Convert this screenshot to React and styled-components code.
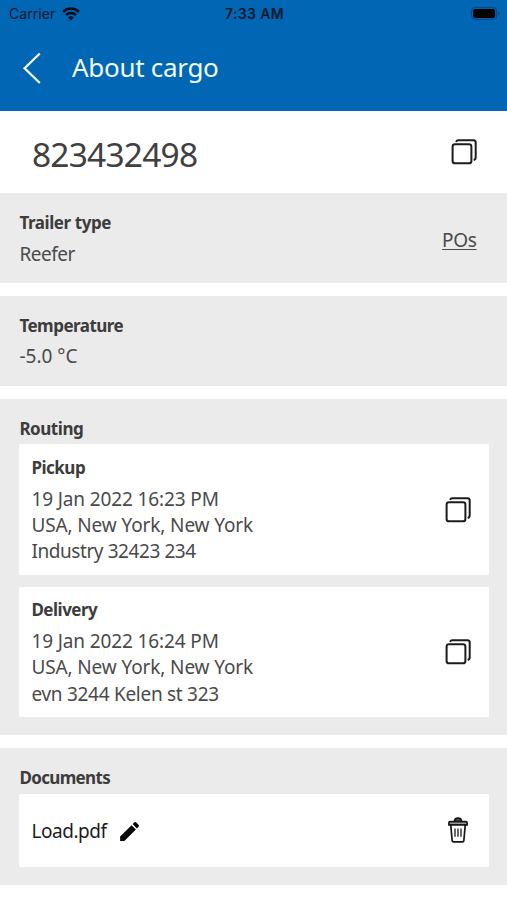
import React from 'react'
import styled, { createGlobalStyle } from 'styled-components'

const GlobalStyle = createGlobalStyle`
  * { box-sizing: border-box; }
  body {
    margin: 0;
    background: #fff;
    color: #4a4a4a;
    font-family: "Noto Sans", "Open Sans", sans-serif;
  }
`

const Screen = styled.main`
  width: 100%;
  max-width: 507px;
  height: 900px;
  overflow: hidden;
  background: #fff;
`

const Header = styled.header`
  height: 110.6px;
  background: #0166b3;
`

const StatusBar = styled.div`
  height: 28px;
  padding: 0 7px 0 9px;
  display: grid;
  grid-template-columns: 1fr auto 1fr;
  align-items: center;
  color: #07182b;
  font-family: Inter, Roboto, sans-serif;
  font-size: 14px;
  line-height: 28px;
`

const Carrier = styled.div`
  display: flex;
  align-items: center;
  gap: 7px;
  letter-spacing: ${p => p.$track}px;
`

const Clock = styled.div`
  font-weight: 600;
  letter-spacing: ${p => p.$track}px;
`

const Battery = styled.svg`
  justify-self: end;
  display: block;
  margin-top: -1px;
`

const NavBar = styled.div`
  height: 80px;
  padding-left: 22px;
  display: flex;
  align-items: center;
  gap: 30px;
  color: #f2fbff;
`

const PlainButton = styled.button`
  display: flex;
  padding: 0;
  border: 0;
  background: none;
  color: inherit;
`

const Title = styled.h1`
  margin: -3px 0 0;
  font-size: 26px;
  font-weight: 400;
  line-height: 36px;
  letter-spacing: ${p => p.$track}px;
`

const NumberRow = styled.div`
  height: 82.4px;
  padding: 0 30px 0 32px;
  display: flex;
  align-items: center;
  justify-content: space-between;
`

const CargoNumber = styled.div`
  margin-top: 5px;
  font-size: 33.5px;
  line-height: 46px;
  color: #404040;
  letter-spacing: ${p => p.$track}px;
`

const Sections = styled.div`
  display: flex;
  flex-direction: column;
  gap: 12.6px;
`

const Section = styled.section`
  height: ${p => p.$height}px;
  padding: 17px 18px 0 19.4px;
  background: #ebebeb;
`

const Row = styled.div`
  display: flex;
  align-items: center;
  justify-content: space-between;
  padding-right: ${p => p.$inset || 0}px;
`

const Heading = styled.h2`
  margin: 0;
  font-size: 17px;
  font-weight: 700;
  line-height: 26px;
  color: #3c3c3c;
  letter-spacing: ${p => p.$track}px;
`

const Line = styled.div`
  font-size: 19px;
  line-height: 26.1px;
  white-space: nowrap;
  letter-spacing: ${p => p.$track}px;
`

const Lines = styled.div`
  margin-top: ${p => p.$top || 5}px;
`

const PosLink = styled.a`
  margin-top: 2px;
  font-size: 19px;
  line-height: 26px;
  letter-spacing: ${p => p.$track}px;
  text-decoration: underline;
  text-decoration-thickness: 1px;
  text-underline-offset: 2px;
`

const Cards = styled.div`
  margin-top: ${p => p.$top}px;
  display: flex;
  flex-direction: column;
  gap: 12.2px;
`

const Card = styled.div`
  height: ${p => p.$height}px;
  padding: 0 ${p => p.$right || 18}px 0 12px;
  display: flex;
  align-items: center;
  justify-content: space-between;
  border-radius: 1px;
  background: #fff;
`

const FileName = styled.div`
  display: flex;
  align-items: center;
  gap: 10px;
  padding-top: 2px;
  color: #1c1c1c;
`

const WifiIcon = () => (
  <svg width='18' height='14' viewBox='0 0 18 14' fill='none' stroke='#020b16' strokeWidth='2.6'>
    <path d='M1.1 4.8a11.2 11.2 0 0 1 15.8 0' />
    <path d='M4.1 8a7 7 0 0 1 9.8 0' />
    <path d='M9 13.4 6.2 10.6a4 4 0 0 1 5.6 0z' fill='#020b16' stroke='none' />
  </svg>
)

const BatteryIcon = () => (
  <Battery width='29' height='13' viewBox='0 0 29 13'>
    <rect x='0.6' y='0.6' width='25' height='11.8' rx='3.4' fill='none' stroke='#04498a' strokeWidth='1.1' />
    <rect x='2.1' y='2.1' width='22' height='8.8' rx='1.8' fill='#000' />
    <path d='M27 4.6c1.6.6 1.6 3.2 0 3.8z' fill='#04498a' />
  </Battery>
)

const BackIcon = () => (
  <svg width='20' height='32' viewBox='0 0 20 32' fill='none' stroke='currentColor' strokeWidth='2.3'>
    <path d='M17.8 1.5 2.6 16.3 17.8 31' />
  </svg>
)

const CopyIcon = () => (
  <svg width='26' height='26' viewBox='0 0 26 26' fill='none' stroke='#1c1c1c' strokeWidth='2'>
    <rect x='1.6' y='5.3' width='18.8' height='19' rx='2.4' />
    <path d='M5 2.8c.5-1.2 1.1-1.6 2.4-1.6h15c1.5 0 2.3.8 2.3 2.3v14.7c0 1.6-.5 2.4-2 2.8' />
  </svg>
)

const PencilIcon = () => (
  <svg width='25' height='25' viewBox='0 0 24 24' fill='#050505'>
    <path d='M3 16.9V21h4.1L18.1 10l-4.1-4.1z' />
    <path d='M20.8 7.3a1.1 1.1 0 0 0 0-1.5l-2.6-2.6a1.1 1.1 0 0 0-1.5 0l-1.7 1.7 4.1 4.1z' />
  </svg>
)

const TrashIcon = () => (
  <svg width='20' height='26' viewBox='0 0 20 26' fill='none' stroke='#161616' strokeWidth='1.7'>
    <path d='M6.5 4.6C6.5 2.2 8 1.2 10 1.2s3.5 1 3.5 3.4z' fill='#555' />
    <path d='M.9 7.8V5.9c0-.8.4-1.2 1.2-1.2h15.8c.8 0 1.2.4 1.2 1.2v1.9z' fill='#999' />
    <path d='m2.8 8 1.3 15.4c.1 1 .6 1.5 1.5 1.5h8.8c.9 0 1.4-.5 1.5-1.5L17.2 8' />
    <path d='M7 11.6v8.2M10 11.6v8.2M13 11.6v8.2' stroke='#444' strokeWidth='1.6' />
  </svg>
)

const stops = [
  {
    name: 'Pickup',
    track: -0.5,
    lines: [
      ['19 Jan 2022 16:23 PM', -0.12],
      ['USA, New York, New York', -0.12],
      ['Industry 32423 234', -0.42]
    ]
  },
  {
    name: 'Delivery',
    track: -0.5,
    lines: [
      ['19 Jan 2022 16:24 PM', -0.12],
      ['USA, New York, New York', -0.12],
      ['evn 3244 Kelen st 323', -0.28]
    ]
  }
]

const Stop = ({ stop }) => (
  <Card $height={130.3}>
    <div>
      <Heading $track={stop.track}>{stop.name}</Heading>
      <Lines>
        {stop.lines.map(([text, track]) => <Line key={text} $track={track}>{text}</Line>)}
      </Lines>
    </div>
    <PlainButton aria-label='Copy'><CopyIcon /></PlainButton>
  </Card>
)

const App = () => (
  <>
    <GlobalStyle />
    <Screen>
      <Header>
        <StatusBar>
          <Carrier $track={0.05}>Carrier <WifiIcon /></Carrier>
          <Clock $track={0.35}>7:33 AM</Clock>
          <BatteryIcon />
        </StatusBar>
        <NavBar>
          <PlainButton aria-label='Back'><BackIcon /></PlainButton>
          <Title $track={-0.3}>About cargo</Title>
        </NavBar>
      </Header>

      <NumberRow>
        <CargoNumber $track={-0.8}>823432498</CargoNumber>
        <PlainButton aria-label='Copy number'><CopyIcon /></PlainButton>
      </NumberRow>

      <Sections>
        <Section $height={90.3}>
          <Row $inset={12.4}>
            <div>
              <Heading $track={-0.42}>Trailer type</Heading>
              <Lines><Line $track={-0.5}>Reefer</Line></Lines>
            </div>
            <PosLink $track={-0.3}>POs</PosLink>
          </Row>
        </Section>

        <Section $height={90.3}>
          <Heading $track={-0.52}>Temperature</Heading>
          <Lines $top={4.4}><Line $track={0}>-5.0 °C</Line></Lines>
        </Section>

        <Section $height={336.3}>
          <Heading $track={-0.45}>Routing</Heading>
          <Cards $top={2.6}>
            {stops.map(stop => <Stop key={stop.name} stop={stop} />)}
          </Cards>
        </Section>

        <Section $height={137.3}>
          <Heading $track={-0.65}>Documents</Heading>
          <Cards $top={3.3}>
            <Card $height={72.8} $right={21}>
              <FileName>
                <Line $track={-0.45}>Load.pdf</Line>
                <PlainButton aria-label='Rename'><PencilIcon /></PlainButton>
              </FileName>
              <PlainButton aria-label='Delete'><TrashIcon /></PlainButton>
            </Card>
          </Cards>
        </Section>
      </Sections>
    </Screen>
  </>
)

export default App
